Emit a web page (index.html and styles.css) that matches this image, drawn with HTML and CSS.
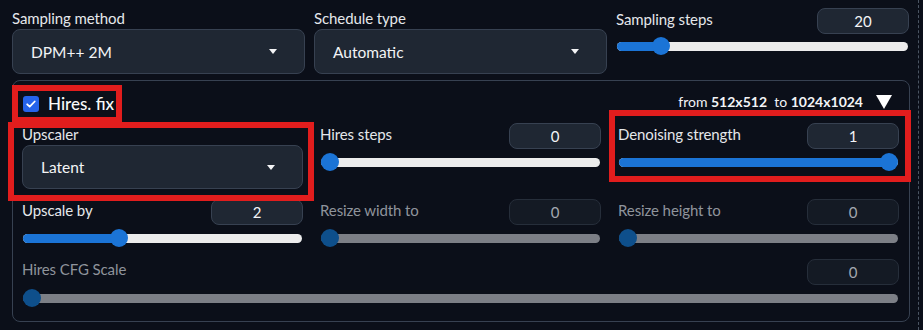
FILE: index.html
```html
<!DOCTYPE html>
<html>
<head>
<meta charset="utf-8">
<link rel="stylesheet" href="styles.css">
</head>
<body>
<div class="page">
  <div class="top-row">
    <div class="field">
      <div class="label">Sampling method</div>
      <div class="dropdown"><span>DPM++ 2M</span><span class="caret"></span></div>
    </div>
    <div class="field">
      <div class="label">Schedule type</div>
      <div class="dropdown"><span>Automatic</span><span class="caret"></span></div>
    </div>
    <div class="slider-block top">
      <div class="slider-head"><span class="label">Sampling steps</span><span class="num">20</span></div>
      <div class="slider"><div class="track"><div class="fill" style="--p:0.1275"></div><div class="thumb" style="--p:0.1275"></div></div></div>
    </div>
  </div>

  <div class="accordion">
    <div class="acc-head">
      <label class="check"><span class="box"><svg viewBox="0 0 16 16" width="16" height="16"><path d="M4.2 8.3l2.5 2.4 5-5.2" fill="none" stroke="#fff" stroke-width="1.8" stroke-linecap="round" stroke-linejoin="round"/></svg></span><span class="check-text">Hires. fix</span></label>
      <div class="acc-right"><span class="acc-info">from <b>512x512</b>&nbsp; to <b>1024x1024</b></span><span class="tri"></span></div>
    </div>
    <div class="grid">
      <div class="field inner">
        <div class="label">Upscaler</div>
        <div class="dropdown"><span>Latent</span><span class="caret"></span></div>
      </div>
      <div class="slider-block">
        <div class="slider-head"><span class="label">Hires steps</span><span class="num">0</span></div>
        <div class="slider"><div class="track"><div class="fill" style="--p:0"></div><div class="thumb" style="--p:0"></div></div></div>
      </div>
      <div class="slider-block">
        <div class="slider-head"><span class="label">Denoising strength</span><span class="num">1</span></div>
        <div class="slider"><div class="track"><div class="fill" style="--p:1"></div><div class="thumb" style="--p:1"></div></div></div>
      </div>

      <div class="slider-block">
        <div class="slider-head"><span class="label">Upscale by</span><span class="num">2</span></div>
        <div class="slider"><div class="track"><div class="fill" style="--p:0.333"></div><div class="thumb" style="--p:0.333"></div></div></div>
      </div>
      <div class="slider-block disabled">
        <div class="slider-head"><span class="label">Resize width to</span><span class="num">0</span></div>
        <div class="slider"><div class="track"><div class="fill" style="--p:0"></div><div class="thumb" style="--p:0"></div></div></div>
      </div>
      <div class="slider-block disabled">
        <div class="slider-head"><span class="label">Resize height to</span><span class="num">0</span></div>
        <div class="slider"><div class="track"><div class="fill" style="--p:0"></div><div class="thumb" style="--p:0"></div></div></div>
      </div>

      <div class="slider-block disabled wide">
        <div class="slider-head"><span class="label">Hires CFG Scale</span><span class="num">0</span></div>
        <div class="slider"><div class="track"><div class="fill" style="--p:0"></div><div class="thumb" style="--p:0"></div></div></div>
      </div>
    </div>

    <div class="mark mark-1"></div>
    <div class="mark mark-2"></div>
    <div class="mark mark-3"></div>
  </div>
</div>
</body>
</html>
```

FILE: styles.css
```css
* { box-sizing: border-box; }
html, body { margin: 0; padding: 0; background: #0b0f19; }
body {
  font-family: Lato, "Noto Sans", "Liberation Sans", sans-serif;
  color: #e5e7eb;
  font-size: 15px;
  width: 923px;
  height: 330px;
  overflow: hidden;
}
.page {
  width: 919px;
  height: 330px;
  padding: 8px 8px 0 12px;
  border-right: 1px dashed #4b5563;
}
.top-row {
  display: grid;
  grid-template-columns: 293px 293px 293px;
  gap: 9px;
  width: 898px;
}
.label {
  font-size: 15px;
  line-height: 20px;
  color: #e5e7eb;
  letter-spacing: -0.1px;
}
.field .label { height: 20px; margin-bottom: 1px; }
.dropdown {
  height: 45px;
  background: #1f2733;
  border: 1px solid #374151;
  border-radius: 8px;
  display: flex;
  align-items: center;
  justify-content: space-between;
  padding: 0 27px 0 18px;
  color: #f3f4f6;
  font-size: 15.5px;
}
.caret {
  width: 0; height: 0;
  border-left: 4.5px solid transparent;
  border-right: 4.5px solid transparent;
  border-top: 5px solid #f3f4f6;
}
.field.inner .label { height: 20px; margin: 1px 0 1px; }
.field.inner .dropdown { height: 44px; padding-left: 18px; }

.slider-block { display: flex; flex-direction: column; }
.slider-head {
  height: 26px;
  display: flex;
  align-items: center;
  justify-content: space-between;
}
.slider-head .label { margin-top: -4px; }
.num {
  width: 92px;
  height: 26px;
  background: #1f2733;
  border: 1px solid #374151;
  border-radius: 8px;
  display: flex;
  align-items: center;
  justify-content: center;
  color: #f3f4f6;
  font-size: 15px;
}
.slider { height: 22px; margin-top: 2px; display: flex; align-items: center; }
.top .slider { margin-top: 1px; }
.track {
  position: relative;
  width: 100%;
  height: 9px;
  border-radius: 5px;
  background: #ececec;
  margin: 0 1px;
}
.fill {
  height: 100%;
  border-radius: 5px;
  background: #1b74d6;
  width: calc(9px + (100% - 18px) * var(--p));
}
.thumb {
  position: absolute;
  top: 50%;
  left: calc(9px + (100% - 18px) * var(--p));
  width: 18px;
  height: 18px;
  margin: -9px 0 0 -9px;
  border-radius: 50%;
  background: #1b74d6;
}
.disabled .label { color: #8f949c; }
.disabled .num { background: #141a24; border-color: #262e3a; color: #a3a8b0; }
.disabled .track { background: #7c7f86; }
.disabled .fill { background: #0e4f8b; }
.disabled .thumb { background: #0e4f8b; }

.accordion {
  position: relative;
  margin-top: 6px;
  width: 898px;
  height: 242px;
  border: 1px solid #374151;
  border-radius: 8px;
  padding: 10px 10px 0 9px;
}
.acc-head {
  height: 24px;
  display: flex;
  align-items: center;
  justify-content: space-between;
  margin-bottom: 8px;
}
.check { display: flex; align-items: center; }
.box {
  width: 16px; height: 16px;
  border-radius: 3px;
  background: #2563eb;
  display: flex;
  margin: 1px 9px 0 1px;
}
.check-text { font-size: 17px; color: #f9fafb; font-weight: 500; }
.acc-right { display: flex; align-items: center; margin-top: -4px; }
.acc-info { font-size: 14px; color: #f3f4f6; white-space: nowrap; }
.acc-info b { font-weight: 700; }
.tri {
  width: 0; height: 0;
  border-left: 8px solid transparent;
  border-right: 8px solid transparent;
  border-top: 14px solid #ffffff;
  margin: 2px 7px 0 13px;
}
.grid {
  display: grid;
  grid-template-columns: 281px 281px 281px;
  column-gap: 17px;
  row-gap: 10px;
}
.wide { grid-column: 1 / 4; }
.wide .slider-head .label { margin-top: -6px; }

.mark {
  position: absolute;
  border: 6px solid #e11d1d;
  pointer-events: none;
}
.mark-1 { left: -1px; top: 4px; width: 110px; height: 38px; }
.mark-2 { left: -5px; top: 41px; width: 306px; height: 79px; }
.mark-3 { left: 596px; top: 29px; width: 302px; height: 72px; }
```
